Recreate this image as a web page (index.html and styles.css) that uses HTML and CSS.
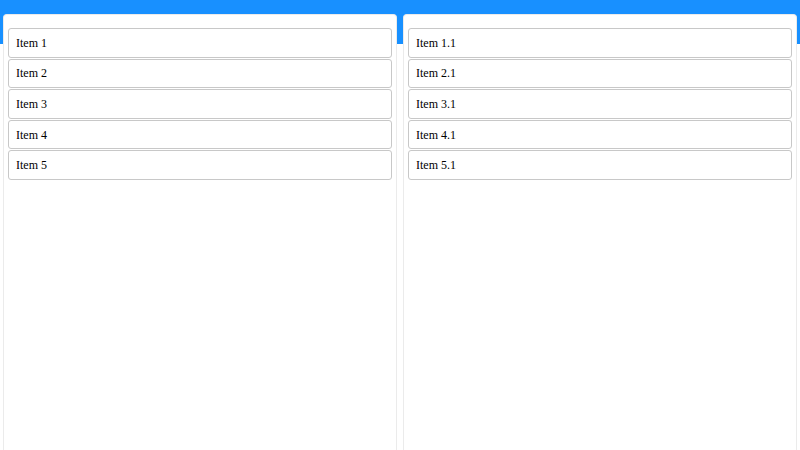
FILE: index.html
```html
<!DOCTYPE html>
<html>
<head>
<meta charset="utf-8">
<link rel="stylesheet" href="styles.css">
</head>
<body>
<div class="board">
  <div class="column">
    <div class="item">Item 1</div>
    <div class="item">Item 2</div>
    <div class="item">Item 3</div>
    <div class="item">Item 4</div>
    <div class="item">Item 5</div>
  </div>
  <div class="column">
    <div class="item">Item 1.1</div>
    <div class="item">Item 2.1</div>
    <div class="item">Item 3.1</div>
    <div class="item">Item 4.1</div>
    <div class="item">Item 5.1</div>
  </div>
</div>
</body>
</html>
```
FILE: styles.css
```css
html, body {
  margin: 0;
  padding: 0;
  height: 100%;
  background: #fff;
}
body {
  font-family: "Liberation Serif", "Times New Roman", serif;
  font-size: 12px;
  color: #000;
}
.board {
  box-sizing: border-box;
  height: 100%;
  display: flex;
  gap: 6px;
  padding: 14px 3px 0;
  background: linear-gradient(#1890ff 44px, #fff 44px);
}
.column {
  flex: 1;
  box-sizing: border-box;
  background: #fff;
  border: 1px solid #ebebeb;
  border-bottom: none;
  border-radius: 4px 4px 0 0;
  padding: 13px 4px 4px;
  display: flex;
  flex-direction: column;
  gap: 1px;
}
.item {
  box-sizing: border-box;
  height: 29.6px;
  border: 1px solid #c8c8c8;
  border-radius: 3px;
  padding: 1px 7px 0;
  display: flex;
  align-items: center;
  background: #fff;
}
```
